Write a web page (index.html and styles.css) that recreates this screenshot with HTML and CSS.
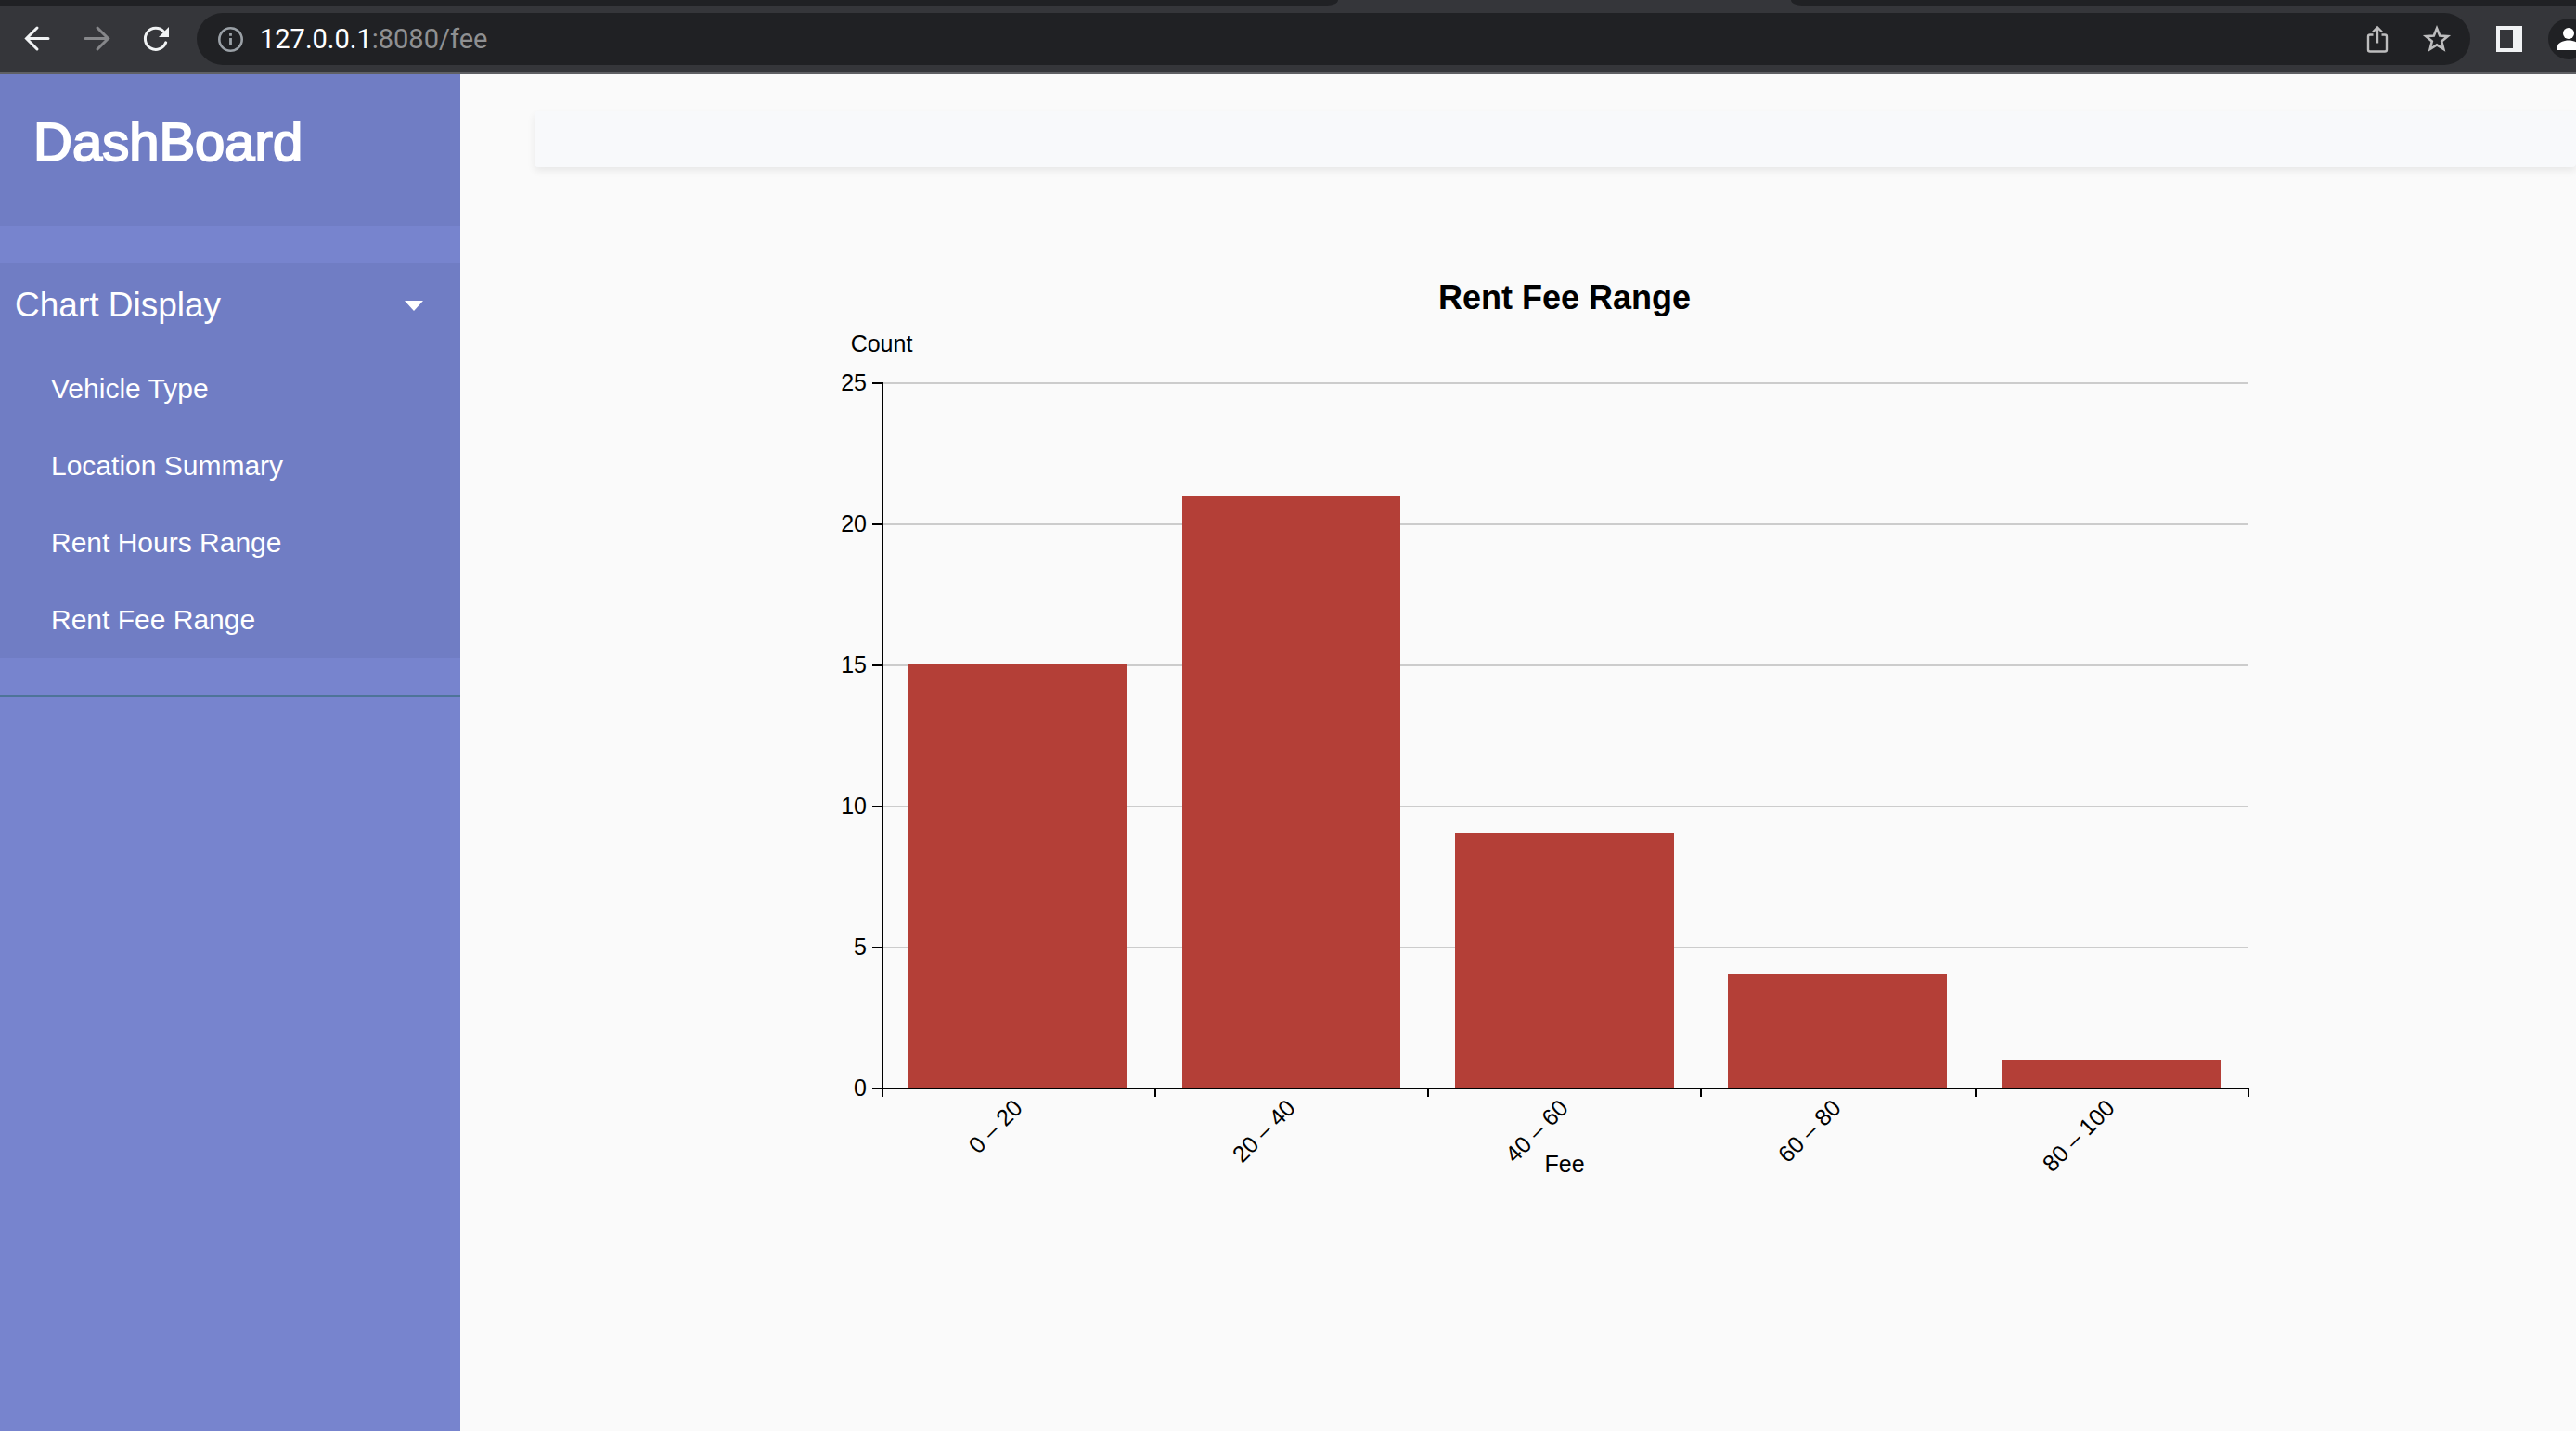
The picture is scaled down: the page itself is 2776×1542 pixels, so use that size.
FILE: index.html
```html
<!DOCTYPE html>
<html lang="en">
<head>
<meta charset="utf-8">
<title>DashBoard</title>
<link rel="stylesheet" href="styles.css">
</head>
<body>
<header class="browser">
  <div class="tabs"><span class="tabs-left"></span><span class="tab-active"></span><span class="tabs-right"></span></div>
  <div class="toolbar">
    <div class="nav-buttons">
      <button class="icon-button" type="button" aria-label="Back">
        <svg viewBox="0 0 32 32"><path d="M28 15.500H5M16 4L4.500 15.500L16 27" fill="none" stroke="#f1f3f4" stroke-width="3" stroke-linecap="round"/></svg>
      </button>
      <button class="icon-button" type="button" aria-label="Forward">
        <svg viewBox="0 0 32 32"><path d="M4 15.500H28M17 4L28.500 15.500L17 27" fill="none" stroke="#86878a" stroke-width="3" stroke-linecap="round"/></svg>
      </button>
      <button class="icon-button" type="button" aria-label="Reload">
        <svg viewBox="0 0 32 32"><path d="M26.700 19.800A11.500 11.500 0 1 1 24.500 8.200" fill="none" stroke="#f1f3f4" stroke-width="3" stroke-linecap="round"/><path d="M30 3V14H19Z" fill="#f1f3f4"/></svg>
      </button>
    </div>
    <div class="omnibox">
      <svg class="icon" viewBox="0 0 32 32"><circle cx="16.500" cy="16.500" r="12.200" fill="none" stroke="#9aa0a6" stroke-width="2.600"/><path d="M16.500 15V23M16.500 10V12.800" stroke="#9aa0a6" stroke-width="2.800"/></svg>
      <div class="url" role="textbox" aria-label="Address" contenteditable="true" spellcheck="false"><span class="host">127.0.0.1</span>:8080/fee</div>
      <button class="icon-button" type="button" aria-label="Share">
        <svg viewBox="0 0 32 32"><path d="M11.500 11.500H8A2 2 0 0 0 6 13.500V27.500A2 2 0 0 0 8 29.500H24A2 2 0 0 0 26 27.500V13.500A2 2 0 0 0 24 11.500H20.500M16 20.500V4M11 8.500L16 3.500L21 8.500" fill="none" stroke="#bdbdbe" stroke-width="2.400"/></svg>
      </button>
      <button class="icon-button" type="button" aria-label="Bookmark">
        <svg viewBox="0 0 32 32"><path d="M16 4.500L19.200 12.500L27.800 13.100L21.200 18.600L23.300 27L16 22.400L8.700 27L10.800 18.600L4.200 13.100L12.800 12.500Z" fill="none" stroke="#bdbdbe" stroke-width="2.600"/></svg>
      </button>
    </div>
    <button class="icon-button" type="button" aria-label="Side panel">
      <svg viewBox="0 0 32 32"><path fill-rule="evenodd" d="M2 2H30V30H2ZM6 6V26H20V6Z" fill="#f1f3f4"/></svg>
    </button>
    <button class="avatar" type="button" aria-label="Profile">
      <svg viewBox="0 0 44 44"><circle cx="22" cy="16" r="6" fill="#fff"/><path d="M10 34V30C10 26 17 23.500 22 23.500S34 26 34 30V34Z" fill="#fff"/></svg>
    </button>
  </div>
</header>
<div class="layout">
  <aside class="sidebar">
    <div class="brand"><h1>DashBoard</h1></div>
    <nav class="menu">
      <button class="menu-toggle" type="button" aria-expanded="true">Chart Display<span class="caret"></span></button>
      <ul class="menu-list">
        <li><a href="#type">Vehicle Type</a></li>
        <li><a href="#location">Location Summary</a></li>
        <li><a href="#hours">Rent Hours Range</a></li>
        <li><a href="#fee">Rent Fee Range</a></li>
      </ul>
    </nav>
    <hr class="divider">
  </aside>
  <main class="content">
    <div class="topbar"></div>
    <svg class="chart" viewBox="0 0 2200 1060" role="img" aria-label="Rent Fee Range">
      <text class="chart-title" x="1110" y="73">Rent Fee Range</text>
      <text class="label" x="374" y="119" text-anchor="middle">Count</text>
      <g class="grid">
        <path d="M376 153H1847M376 305H1847M376 457H1847M376 609H1847M376 761H1847"/>
      </g>
      <g class="bars">
        <rect x="403" y="456" width="236" height="456"/>
        <rect x="698" y="274" width="235" height="638"/>
        <rect x="992" y="638" width="236" height="274"/>
        <rect x="1286" y="790" width="236" height="122"/>
        <rect x="1581" y="882" width="236" height="30"/>
      </g>
      <g class="axis">
        <path d="M375 152V922M364 153H376M364 305H376M364 457H376M364 609H376M364 761H376M364 913H1848M669 913V922M963 913V922M1257 913V922M1553 913V922M1847 913V922"/>
      </g>
      <g class="label" text-anchor="end">
        <text x="358" y="161">25</text>
        <text x="358" y="313">20</text>
        <text x="358" y="465">15</text>
        <text x="358" y="617">10</text>
        <text x="358" y="769">5</text>
        <text x="358" y="921">0</text>
        <text transform="translate(521 929) rotate(-45)" y="9">0 – 20</text>
        <text transform="translate(815 929) rotate(-45)" y="9">20 – 40</text>
        <text transform="translate(1109 929) rotate(-45)" y="9">40 – 60</text>
        <text transform="translate(1403 929) rotate(-45)" y="9">60 – 80</text>
        <text transform="translate(1698 929) rotate(-45)" y="9">80 – 100</text>
      </g>
      <text class="label" x="1110" y="1003" text-anchor="middle">Fee</text>
    </svg>
  </main>
</div>
</body>
</html>
```
FILE: styles.css
```css
* { box-sizing: border-box; }
body {
  margin: 0;
  min-height: 100vh;
  display: flex;
  flex-direction: column;
  overflow-x: hidden;
  background: #fafafa;
  font-family: "Liberation Sans", Arial, sans-serif;
}
button { border: 0; padding: 0; background: none; color: inherit; font: inherit; }

.browser { background: #35363a; border-bottom: 2px solid #5f6064; overflow: hidden; }
.tabs { display: flex; height: 6px; }
.tabs-left { flex: 1442; background: #202124; border-bottom-right-radius: 12px 6px; }
.tab-active { flex: 488; }
.tabs-right { flex: 846; background: #202124; border-bottom-left-radius: 12px 6px; }
.toolbar { display: flex; align-items: center; gap: 26px; padding: 8px 0 8px 24px; }
.nav-buttons { display: flex; gap: 32px; margin-right: 2px; }
.icon-button, .icon { display: block; flex: none; width: 32px; height: 32px; }
.icon-button svg, .avatar svg { display: block; width: 100%; height: 100%; }
.omnibox {
  flex: 1;
  display: flex;
  align-items: center;
  gap: 32px;
  height: 56px;
  padding: 0 20px;
  border-radius: 28px;
  background: #202124;
}
.url {
  flex: 1;
  margin-left: -16px;
  color: #8f9092;
  font-family: Roboto, sans-serif;
  font-size: 29px;
  line-height: 36px;
}
.host { color: #fff; }
.avatar { flex: none; width: 44px; height: 44px; margin-right: -14px; border-radius: 50%; background: #202124; }

.layout { flex: 1; display: flex; }
.sidebar { flex: none; width: 496px; background: #7784ce; color: #fff; }
.brand { padding: 41px 36px 58px; background: #707dc4; }
.brand h1 { margin: 0; font-size: 58px; line-height: 64px; font-weight: 400; -webkit-text-stroke: 2px #fff; }
.menu { margin: 40px 0; background: #707dc4; }
.menu-toggle {
  display: flex;
  align-items: center;
  justify-content: space-between;
  width: 100%;
  height: 94px;
  padding: 0 40px 2px 16px;
  font-size: 37px;
  line-height: 48px;
}
.caret { border: 10px solid transparent; border-top: 11px solid #fff; border-bottom: 0; }
.menu-list { margin: 0; padding: 0; list-style: none; }
.menu-list a {
  display: block;
  padding-left: 55px;
  color: #fff;
  font-size: 30px;
  line-height: 83px;
  text-decoration: none;
}
.divider { margin: 0; border: 0; border-top: 2px solid #4e7498; }

.content { flex: 1; min-width: 0; padding: 40px 0 0 80px; }
.topbar { height: 60px; border-radius: 4px; background: #f8f9fb; box-shadow: 0 4px 8px rgba(0, 0, 0, 0.075); }
.chart { display: block; width: 100%; margin-top: 80px; }
.chart-title { font-size: 36px; font-weight: 700; text-anchor: middle; }
.label { font-size: 25px; }
.grid { fill: none; stroke: #ccc; stroke-width: 2; }
.bars { fill: #b43f37; }
.axis { fill: none; stroke: #000; stroke-width: 2; }
```
